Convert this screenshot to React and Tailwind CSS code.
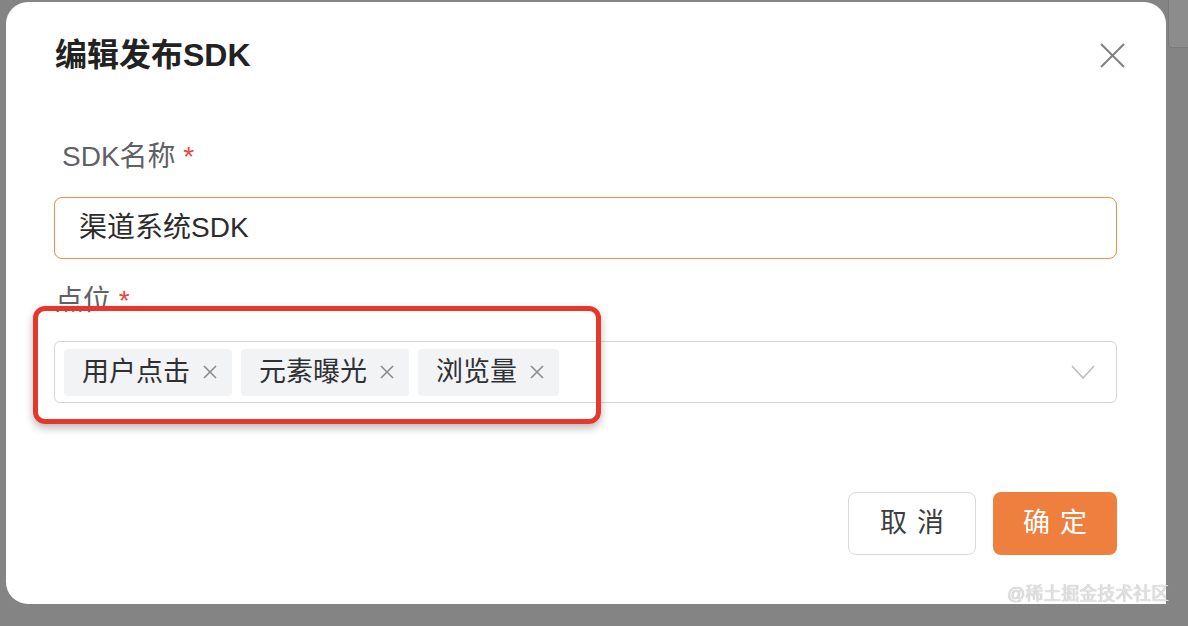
const font = { fontFamily: '"Liberation Sans", "Noto Sans CJK SC", sans-serif' };

const tags = ["用户点击", "元素曝光", "浏览量"];

const CloseIcon = ({ size, stroke, className }) => (
  <svg width={size} height={size} viewBox={`0 0 ${size} ${size}`} className={className}>
    <path
      d={`M1 1 L${size - 1} ${size - 1} M${size - 1} 1 L1 ${size - 1}`}
      fill="none"
      stroke="currentColor"
      strokeWidth={stroke}
    />
  </svg>
);

const App = () => {
  return (
    <div className="w-[1188px] h-[626px] bg-[#848484] overflow-hidden relative" style={font}>
      {/* dimmed page behind */}
      <div className="absolute right-0 top-0 w-[20px] h-[48px] bg-[#8c8c8c] border-l border-b border-[#7a7a7a] rounded-bl-[4px]" />

      {/* Modal */}
      <div className="absolute left-[6px] top-[2px] w-[1160px] h-[602px] bg-white rounded-tl-[22px] rounded-tr-[22px] rounded-bl-[22px]">
        <div className="flex flex-col pl-[48px] pr-[49px] pt-[33px]">
          <div className="flex items-center justify-between h-[40px]">
            <h2 className="text-[32px] leading-[40px] font-bold text-[#222] pl-[1px]">编辑发布SDK</h2>
            <CloseIcon size={25} stroke={2} className="text-[#7f7f7f] mr-[-8px] mt-[1px]" />
          </div>

          <label className="mt-[64px] h-[36px] leading-[36px] pl-[8px] text-[28px] text-[#5f6166]">
            SDK名称 <span className="text-[#e8473b]">*</span>
          </label>
          <div className="mt-[22px] h-[62px] border-[1.5px] border-[#ee8a4c] rounded-[8px] flex items-center pl-[24px] text-[28px] text-[#2b2b2b]">
            渠道系统SDK
          </div>

          <label className="mt-[24px] h-[36px] leading-[36px] pl-[1px] text-[28px] text-[#5f6166]">
            点位 <span className="text-[#e8473b]">*</span>
          </label>
          <div className="mt-[22px] h-[62px] border border-[#d6d6d6] rounded-[6px] flex items-center pl-[9px] pr-[21px]">
            <div className="flex items-center gap-[9px] flex-1">
              {tags.map((t) => (
                <span
                  key={t}
                  className="h-[47px] bg-[#f2f3f5] rounded-[4px] flex items-center pl-[18px] pr-[15px] text-[27px] text-[#2f3033]"
                >
                  {t}
                  <CloseIcon size={14} stroke={1.6} className="ml-[13px] text-[#8c8c8c]" />
                </span>
              ))}
            </div>
            <svg width="24" height="14" viewBox="0 0 24 14" className="text-[#bdbdbd]">
              <path d="M1 1 L12 13 L23 1" fill="none" stroke="currentColor" strokeWidth="1.6" />
            </svg>
          </div>

          <div className="mt-[89px] flex justify-end gap-[17px]">
            <button className="w-[128px] h-[63px] border-[1.5px] border-[#d9d9d9] rounded-[8px] bg-white text-[27px] text-[#3d3d3d] tracking-[10px] pl-[10px]">
              取消
            </button>
            <button className="w-[124px] h-[63px] rounded-[8px] bg-[#ef7f3e] text-[27px] text-white tracking-[10px] pl-[10px]">
              确定
            </button>
          </div>
        </div>

        {/* red annotation */}
        <div className="absolute left-[27px] top-[304px] w-[568px] h-[118px] border-[5px] border-[#e5372c] rounded-[12px] shadow-[0_4px_8px_rgba(0,0,0,0.28)]" />
      </div>

      {/* watermark */}
      <div className="absolute left-[1007px] top-[582px] text-[18px] leading-[24px] text-[#e2e2e2] [text-shadow:0_0_1px_rgba(0,0,0,0.35)]">
        @稀土掘金技术社区
      </div>
    </div>
  );
};

export default App;
